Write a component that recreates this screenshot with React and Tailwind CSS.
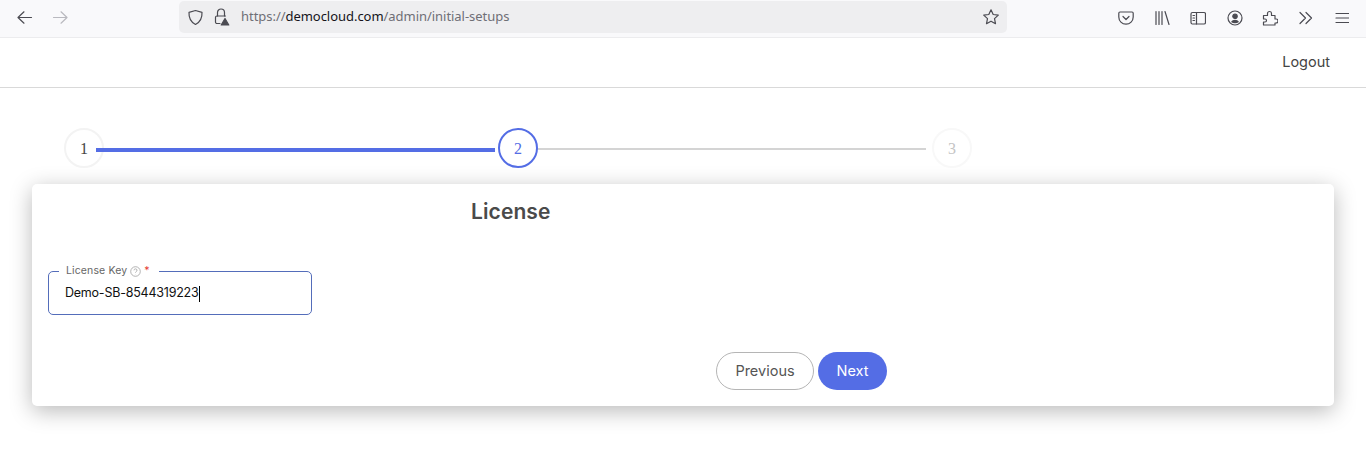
import React from "react";

const Ico = ({ children, w = 18, h = 18, vb = "0 0 18 18", c = "#4b4b52", sw = 1.2, cls = "" }) => (
  <svg width={w} height={h} viewBox={vb} fill="none" stroke={c} strokeWidth={sw} strokeLinecap="round" strokeLinejoin="round" className={"block shrink-0 " + cls}>{children}</svg>
);

const Step = ({ n, cls, text }) => (
  <div className={"relative z-10 w-10 h-10 rounded-full bg-white flex items-center justify-center shrink-0 pt-[1px] text-[16px] [font-family:'Liberation_Serif',serif] " + cls + " " + text}>{n}</div>
);

export default function App() {
  return (
    <div className="w-[1366px] h-[451px] overflow-hidden bg-white [font-family:Inter,'Noto_Sans',sans-serif]">
      {/* browser toolbar */}
      <div className="h-[38px] bg-[#f9f9fb] border-b border-[#ececee] flex items-center relative">
        <div className="flex items-center w-[179px] pl-[16px] gap-[19px] pb-[2px]">
          <Ico w={17} h={17} vb="0 0 17 17"><path d="M15.500 8.500H2M8 2.800 2 8.500l6 5.700" /></Ico>
          <Ico w={17} h={17} vb="0 0 17 17" c="#b9b9bf"><path d="M1.500 8.500H15M9 2.800l6 5.700-6 5.700" /></Ico>
        </div>
        <div className="w-[828px] h-[32px] mb-[3px] rounded-[5px] bg-[#eeeef0] flex items-center pl-[8px] pr-[7px]">
          <Ico w={17} h={17} vb="0 0 17 17" cls="mr-[10px]"><path d="M8.500 1.500 15 3.300c.3 5.500-1.500 9.700-6.500 12.200C3.500 13 1.700 8.800 2 3.300Z" /></Ico>
          <Ico w={16} h={18} vb="0 0 16 18" cls="mr-[11px]">
            <path d="M3.500 8V4.500a3.500 3.500 0 0 1 7 0V8" />
            <path d="M6 15.500H3A1.500 1.500 0 0 1 1.500 14V9.500A1.500 1.500 0 0 1 3 8h8.500" />
            <path d="M11 10.500l3.800 6.500H7.200Z" fill="#4b4b52" stroke="#4b4b52" />
          </Ico>
          <span className="text-[13px] tracking-[-0.04px] text-[#6f6f76] [font-family:'Noto_Sans',sans-serif]">https://<span className="text-[#15141a]">democloud.com</span>/admin/initial-setups</span>
          <Ico cls="ml-auto" w={18} h={18}><path d="m9 1.800 2.200 4.700 5.100.6-3.800 3.500 1 5.100L9 13.200l-4.500 2.500 1-5.100L1.700 7.100l5.100-.6Z" /></Ico>
        </div>
        <div className="flex-1 flex items-center pb-[2px] pl-[111px]">
          <Ico w={16} h={16} vb="0 0 16 16" cls="mr-[20px]"><path d="M2 2h12a1.200 1.200 0 0 1 1.200 1.200V7a7.200 7.200 0 0 1-14.400 0V3.200A1.200 1.200 0 0 1 2 2Z" /><path d="m5 6.500 3 3 3-3" /></Ico>
          <Ico w={16} h={16} vb="0 0 16 16" cls="mr-[20px]"><path d="M2 1.500v13M5 1.500v13M8 1.500v13M11 1.500l4 13" /></Ico>
          <Ico w={16} h={16} vb="0 0 16 16" cls="mr-[21px]"><rect x="1" y="2.500" width="14.500" height="11.500" rx="1.500" /><path d="M6.500 2.500v11.500M3 5.500h1.500M3 8h1.500M3 10.500h1.500" /></Ico>
          <Ico w={16} h={16} vb="0 0 16 16" cls="mr-[19px]"><circle cx="8" cy="8" r="7" /><circle cx="8" cy="6.200" r="2.200" fill="#4b4b52" /><path d="M4 12c1-1.600 2.300-2.300 4-2.300s3 .7 4 2.300c-2.500 1.700-5.500 1.700-8 0Z" fill="#4b4b52" stroke="none" /></Ico>
          <Ico w={16} h={16} vb="0 0 16 16" cls="mr-[21px]"><path d="M1.500 5.500h4V3.500a2 2 0 0 1 4 0v2h3.500v3.500h1a2 2 0 0 1 0 4h-1v2H1.500v-3h1.500a1.500 1.500 0 0 0 0-3H1.500Z" /></Ico>
          <Ico w={14} h={14} vb="0 0 14 14" cls="mr-[22px]"><path d="m1 1.500 5.500 5.500L1 12.500M7 1.500l5.500 5.500L7 12.500" /></Ico>
          <Ico w={14} h={14} vb="0 0 14 14"><path d="M1 2.500h12.500M1 7h12.500M1 11.500h12.500" /></Ico>
        </div>
      </div>

      {/* app header */}
      <div className="h-[50px] border-b border-[#d9d9d9] flex items-center justify-end pr-[36px]">
        <span className="text-[14.5px] text-[#444] pb-[1px]">Logout</span>
      </div>

      {/* stepper */}
      <div className="flex items-center pl-[64px] pt-[40px] h-[96px] pb-[16px]">
        <Step n="1" cls="border-2 border-[#f3f3f3]" text="text-[#444]" />
        <div className="relative z-20 -ml-[8px] mr-[3px] w-[399px] h-[4px] mt-[4px] bg-[#546de5]" />
        <Step n="2" cls="border-2 border-[#546de5]" text="text-[#546de5]" />
        <div className="relative -ml-[9px] w-[397px] h-[2px] mt-[2px] bg-[#d4d4d4]" />
        <Step n="3" cls="ml-[6px] border-2 border-[#f8f8f8]" text="text-[#c4c4c4]" />
      </div>

      {/* card */}
      <div className="mx-[32px] h-[222px] rounded-[5px] bg-white shadow-[0_5px_22px_rgba(0,0,0,0.28)] flex flex-col">
        <div className="pl-[439px] pt-[14px] h-[87px]">
          <h2 className="text-[21px] leading-[28px] tracking-[0.1px] font-semibold text-[#4a4a4a]">License</h2>
        </div>
        <div className="ml-[16px] w-[264px] h-[44px] relative rounded-[5px] border border-[#546dba] flex items-center pl-[16px] pt-[1px]">
          <span className="text-[12.5px] text-[#111] tracking-[-0.22px]">Demo-SB-8544319223</span>
          <span className="w-px h-[16px] bg-black" />
          <div className="absolute left-[10px] -top-[9px] h-[16px] pl-[7px] pr-[9px] bg-white flex items-center gap-[3px] text-[10.5px] tracking-[0.12px] text-[#666]">
            <span>License Key</span>
            <svg width="11" height="11" viewBox="0 0 11 11" fill="none" stroke="#aaa" strokeWidth="0.9" className="block"><circle cx="5.500" cy="5.500" r="4.800" /><path d="M4 4.300a1.500 1.500 0 1 1 2.100 1.400c-.4.200-.6.400-.6.900M5.500 8v.2" /></svg>
            <span className="text-[#e53935]">*</span>
          </div>
        </div>
        <div className="flex justify-start pl-[684px] pt-[37px] gap-[4px]">
          <button className="w-[98px] h-[38px] rounded-full border border-[#b5b5b5] bg-white text-[14.5px] text-[#555]">Previous</button>
          <button className="w-[69px] h-[38px] rounded-full bg-[#546de5] text-[14.5px] text-white">Next</button>
        </div>
      </div>
    </div>
  );
}
